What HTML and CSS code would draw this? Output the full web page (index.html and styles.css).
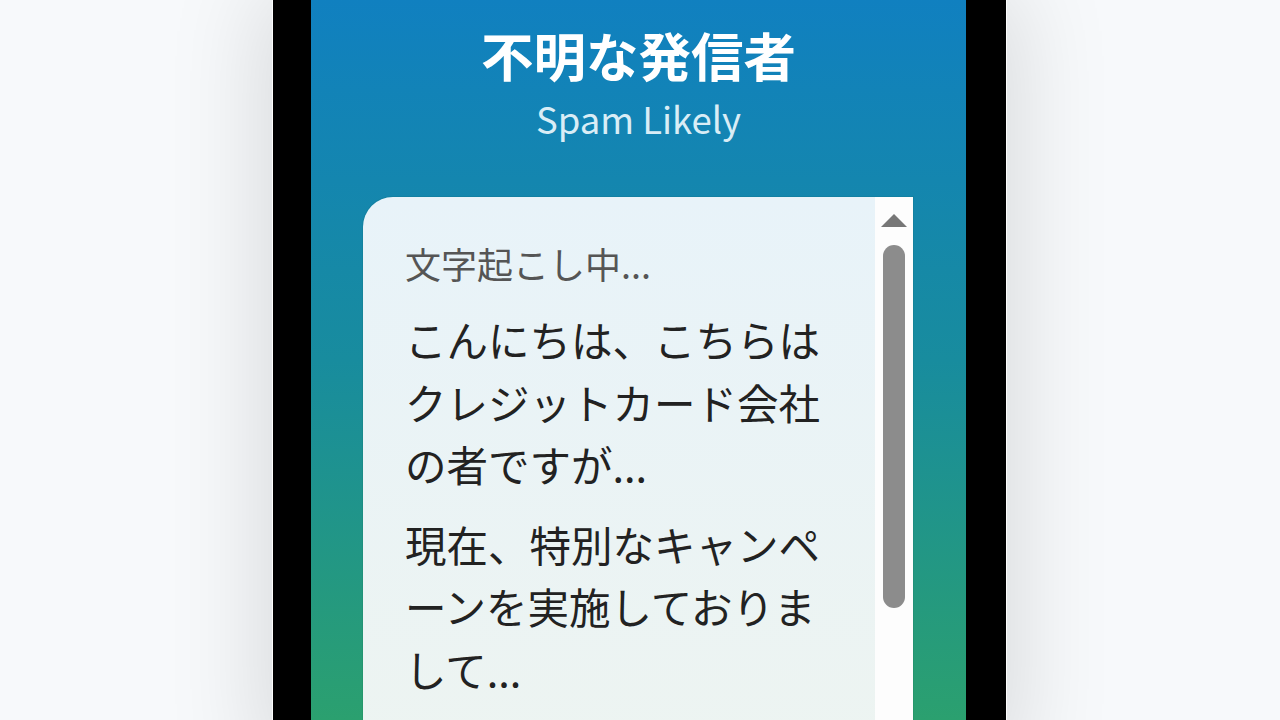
FILE: index.html
```
<!DOCTYPE html>
<html lang="ja">
<head>
<meta charset="utf-8">
<title>不明な発信者</title>
<link rel="stylesheet" href="styles.css">
</head>
<body>
<div class="stage">
  <div class="phone">
    <div class="screen">
      <h1 class="caller">不明な発信者</h1>
      <p class="label">Spam Likely</p>
      <div class="card">
        <div class="transcript">
          <p class="status">文字起こし中...</p>
          <p class="line">こんにちは、こちらはクレジットカード会社の者ですが...</p>
          <p class="line">現在、特別なキャンペーンを実施しておりまして...</p>
        </div>
        <div class="scrollbar">
          <div class="arrow"></div>
          <div class="thumb"></div>
        </div>
      </div>
    </div>
  </div>
</div>
</body>
</html>
```
FILE: styles.css
```
html, body {
  margin: 0;
  padding: 0;
}
body {
  width: 1280px;
  height: 720px;
  overflow: hidden;
  background: #f7f9fb;
  font-family: "Noto Sans CJK JP", "Noto Sans", sans-serif;
}
.stage {
  display: flex;
  justify-content: center;
}
.phone {
  width: 733px;
  box-sizing: border-box;
  height: 760px;
  margin-right: 1px;
  background: #000;
  padding: 0 40px 0 38px;
  box-shadow: 0 0 0 1px rgba(255,255,255,0.9), 0 0 90px 10px rgba(0,0,0,0.13);
}
.screen {
  height: 100%;
  background: linear-gradient(180deg, #1080c0 0px, #188c9e 360px, #2ba06f 720px, #2ca26c 760px);
  padding-top: 22px;
  box-sizing: border-box;
  display: flex;
  flex-direction: column;
  align-items: center;
}
.caller {
  margin: 0;
  font-size: 52.5px;
  line-height: 64px;
  font-weight: 700;
  color: #fff;
}
.label {
  margin: 11px 0 0;
  font-size: 36.5px;
  line-height: 44px;
  color: #d9edf6;
}
.card {
  align-self: stretch;
  margin: 56px 53px 0 52px;
  flex: 1;
  display: flex;
  border-top-left-radius: 30px;
  background: linear-gradient(180deg, #e8f3f9 0%, #edf4f1 100%);
  box-shadow: 0 0 0 1px rgba(0,60,40,0.08);
  overflow: hidden;
}
.transcript {
  flex: 1;
  padding: 41px 40px 0 42px;
}
.status {
  margin: 0 0 20px;
  font-size: 36px;
  line-height: 50px;
  color: #555;
}
.line {
  margin: 0 0 17px;
  font-size: 41.5px;
  line-height: 62.5px;
  color: #222;
}
.scrollbar {
  width: 38px;
  background: #fdfdfd;
  display: flex;
  flex-direction: column;
  align-items: center;
}
.arrow {
  margin-top: 17px;
  width: 0;
  height: 0;
  border-left: 13px solid transparent;
  border-right: 13px solid transparent;
  border-bottom: 13px solid #777;
}
.thumb {
  margin-top: 18px;
  width: 22px;
  height: 363px;
  border-radius: 11px;
  background: #8c8c8c;
}
```
